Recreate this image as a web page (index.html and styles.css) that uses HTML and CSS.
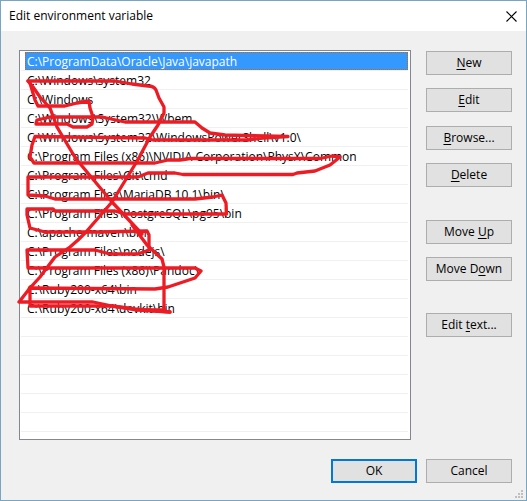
FILE: index.html
```html
<!DOCTYPE html>
<html lang="en">
<head>
<meta charset="utf-8">
<title>Edit environment variable</title>
<link rel="stylesheet" href="styles.css">
</head>
<body>
<div class="dialog">
  <header class="titlebar">
    <h1>Edit environment variable</h1>
    <svg class="close" width="11" height="11" viewBox="0 0 11 11"><path d="M.5 .5l10 10M10.5 .5l-10 10"/></svg>
  </header>
  <main class="body">
    <ul class="list">
      <li class="selected"><span>C:\ProgramData\Oracle\Java\javapath</span></li>
      <li><span>C:\Windows\system32</span></li>
      <li><span>C:\Windows</span></li>
      <li><span>C:\Windows\System32\Wbem</span></li>
      <li><span>C:\Windows\System32\WindowsPowerShell\v1.0\</span></li>
      <li><span>C:\Program Files (x86)\NVIDIA Corporation\PhysX\Common</span></li>
      <li><span>C:\Program Files\Git\cmd</span></li>
      <li><span>C:\Program Files\MariaDB 10.1\bin\</span></li>
      <li><span>C:\Program Files\PostgreSQL\pg95\bin</span></li>
      <li><span>C:\apache-maven\bin</span></li>
      <li><span>C:\Program Files\nodejs\</span></li>
      <li><span>C:\Program Files (x86)\Pandoc\</span></li>
      <li><span>C:\Ruby200-x64\bin</span></li>
      <li><span>C:\Ruby200-x64\devkit\bin</span></li>
      <li></li><li></li><li></li><li></li><li></li><li></li>
    </ul>
    <div class="actions">
      <button><u>N</u>ew</button>
      <button><u>E</u>dit</button>
      <button class="push">&#8203;<u>B</u>rowse...</button>
      <button><u>D</u>elete</button>
      <button class="group">Move <u>U</u>p</button>
      <button>Move D<u>o</u>wn</button>
      <button class="last">Edit <u>t</u>ext...</button>
    </div>
  </main>
  <footer class="footer">
    <button class="default">OK</button>
    <button>Cancel</button>
  </footer>
  <svg class="grip" width="8" height="8" viewBox="0 0 8 8"><path d="M6 0h2v2H6zM3 3h2v2H3zM6 3h2v2H6zM0 6h2v2H0zM3 6h2v2H3zM6 6h2v2H6z"/></svg>
  <svg class="scribble" width="527" height="501" viewBox="0 0 527 501">
    <path d="M28 81H115L132 84L148 86Q154 86 156 90L159 98L164 107V113L158 125L150 137L142 152L139 158L112 202L86 232L78 240L70 247L55 257L40 277L30 288L19 302H93L112 306L138 310L170 312"/>
    <path d="M28 81L33 87L40 97L50 108L57 127L73 154L77 160L112 202L142 234M132 225L147 245L162 259L164 267V310"/>
    <path d="M30 83L35 100L38 106H65L77 103L89 101L90 108L93 117L92 124L87 127H73L67 124H36L37 120L50 117H102L125 122H195L202 128L210 133L225 135L288 136.500L263 138L248 140H153L145 138L35 136.500L32 145L30 157L34 163H155L168 160L180 160L190 158.500H320L332 156L340 157L330 165L315 171L297 173L293 174.500H183L175 173H148L138 177H28V195L45 196L55 199H195L213 197L222 195L226 203L226.500 214H125L115 211H55L53 209H27V215L30 228L45 232H98L147 231L149 235V250L138 254H110L95 250H27L28 268H195L201 271L195 278L168 287L155 289L30 288V306H112L135 309L170 312"/>
    <path d="M145 310H165"/>
  </svg>
</div>
</body>
</html>
```
FILE: styles.css
```css
* { box-sizing: border-box; }
body { margin: 0; font: 12px/18px "Open Sans", "Noto Sans", sans-serif; color: #000; }
.dialog { position: relative; width: 527px; height: 501px; border: 1px solid #76a6c4; background: #f0f0f0; display: flex; flex-direction: column; }
.titlebar { height: 30px; flex: none; background: #fff; display: flex; align-items: center; justify-content: space-between; padding: 0 9px 0 8px; }
.titlebar h1 { margin: 0; font-size: 12px; font-weight: 400; }
.close { stroke: #000; stroke-width: 1.1; fill: none; }
.body { display: flex; gap: 15px; padding: 19px 0 0 18px; }
.list { list-style: none; margin: 0; padding: 1px 2px 0 1px; width: 392px; height: 390px; border: 1px solid #828790; background: #fff; }
.list li { height: 19px; border-bottom: 1px solid #f0f0f0; padding-left: 4px; white-space: pre; }
.list span { display: block; height: 18px; line-height: 19px; padding-left: 2px; }
.selected span { background: #3399ff; color: #fff; outline: 1px dotted #cc6600; outline-offset: -1px; }
.actions { display: flex; flex-direction: column; padding-top: 1px; }
button { width: 86px; height: 24px; padding: 0; border: 1px solid #adadad; background: #e1e1e1; font: inherit; line-height: 20px; color: #000; }
.actions button { margin-bottom: 13px; }
.actions .push { margin-top: 1px; }
.actions .group { margin-top: 20px; }
.actions .last { margin-top: 19px; margin-bottom: 0; }
u { text-decoration-thickness: 1px; text-underline-offset: 2px; text-decoration-skip-ink: none; }
.footer { display: flex; gap: 9px; justify-content: flex-end; padding: 19px 14px 0 0; }
.default { border: 2px solid #0078d7; line-height: 18px; }
.grip { position: absolute; right: 3px; bottom: 2px; fill: #bfbfbf; }
.scribble { position: absolute; left: -1px; top: -1px; pointer-events: none; fill: none; stroke: #ed1c24; stroke-width: 3.300; stroke-linejoin: round; stroke-linecap: round; }
```
